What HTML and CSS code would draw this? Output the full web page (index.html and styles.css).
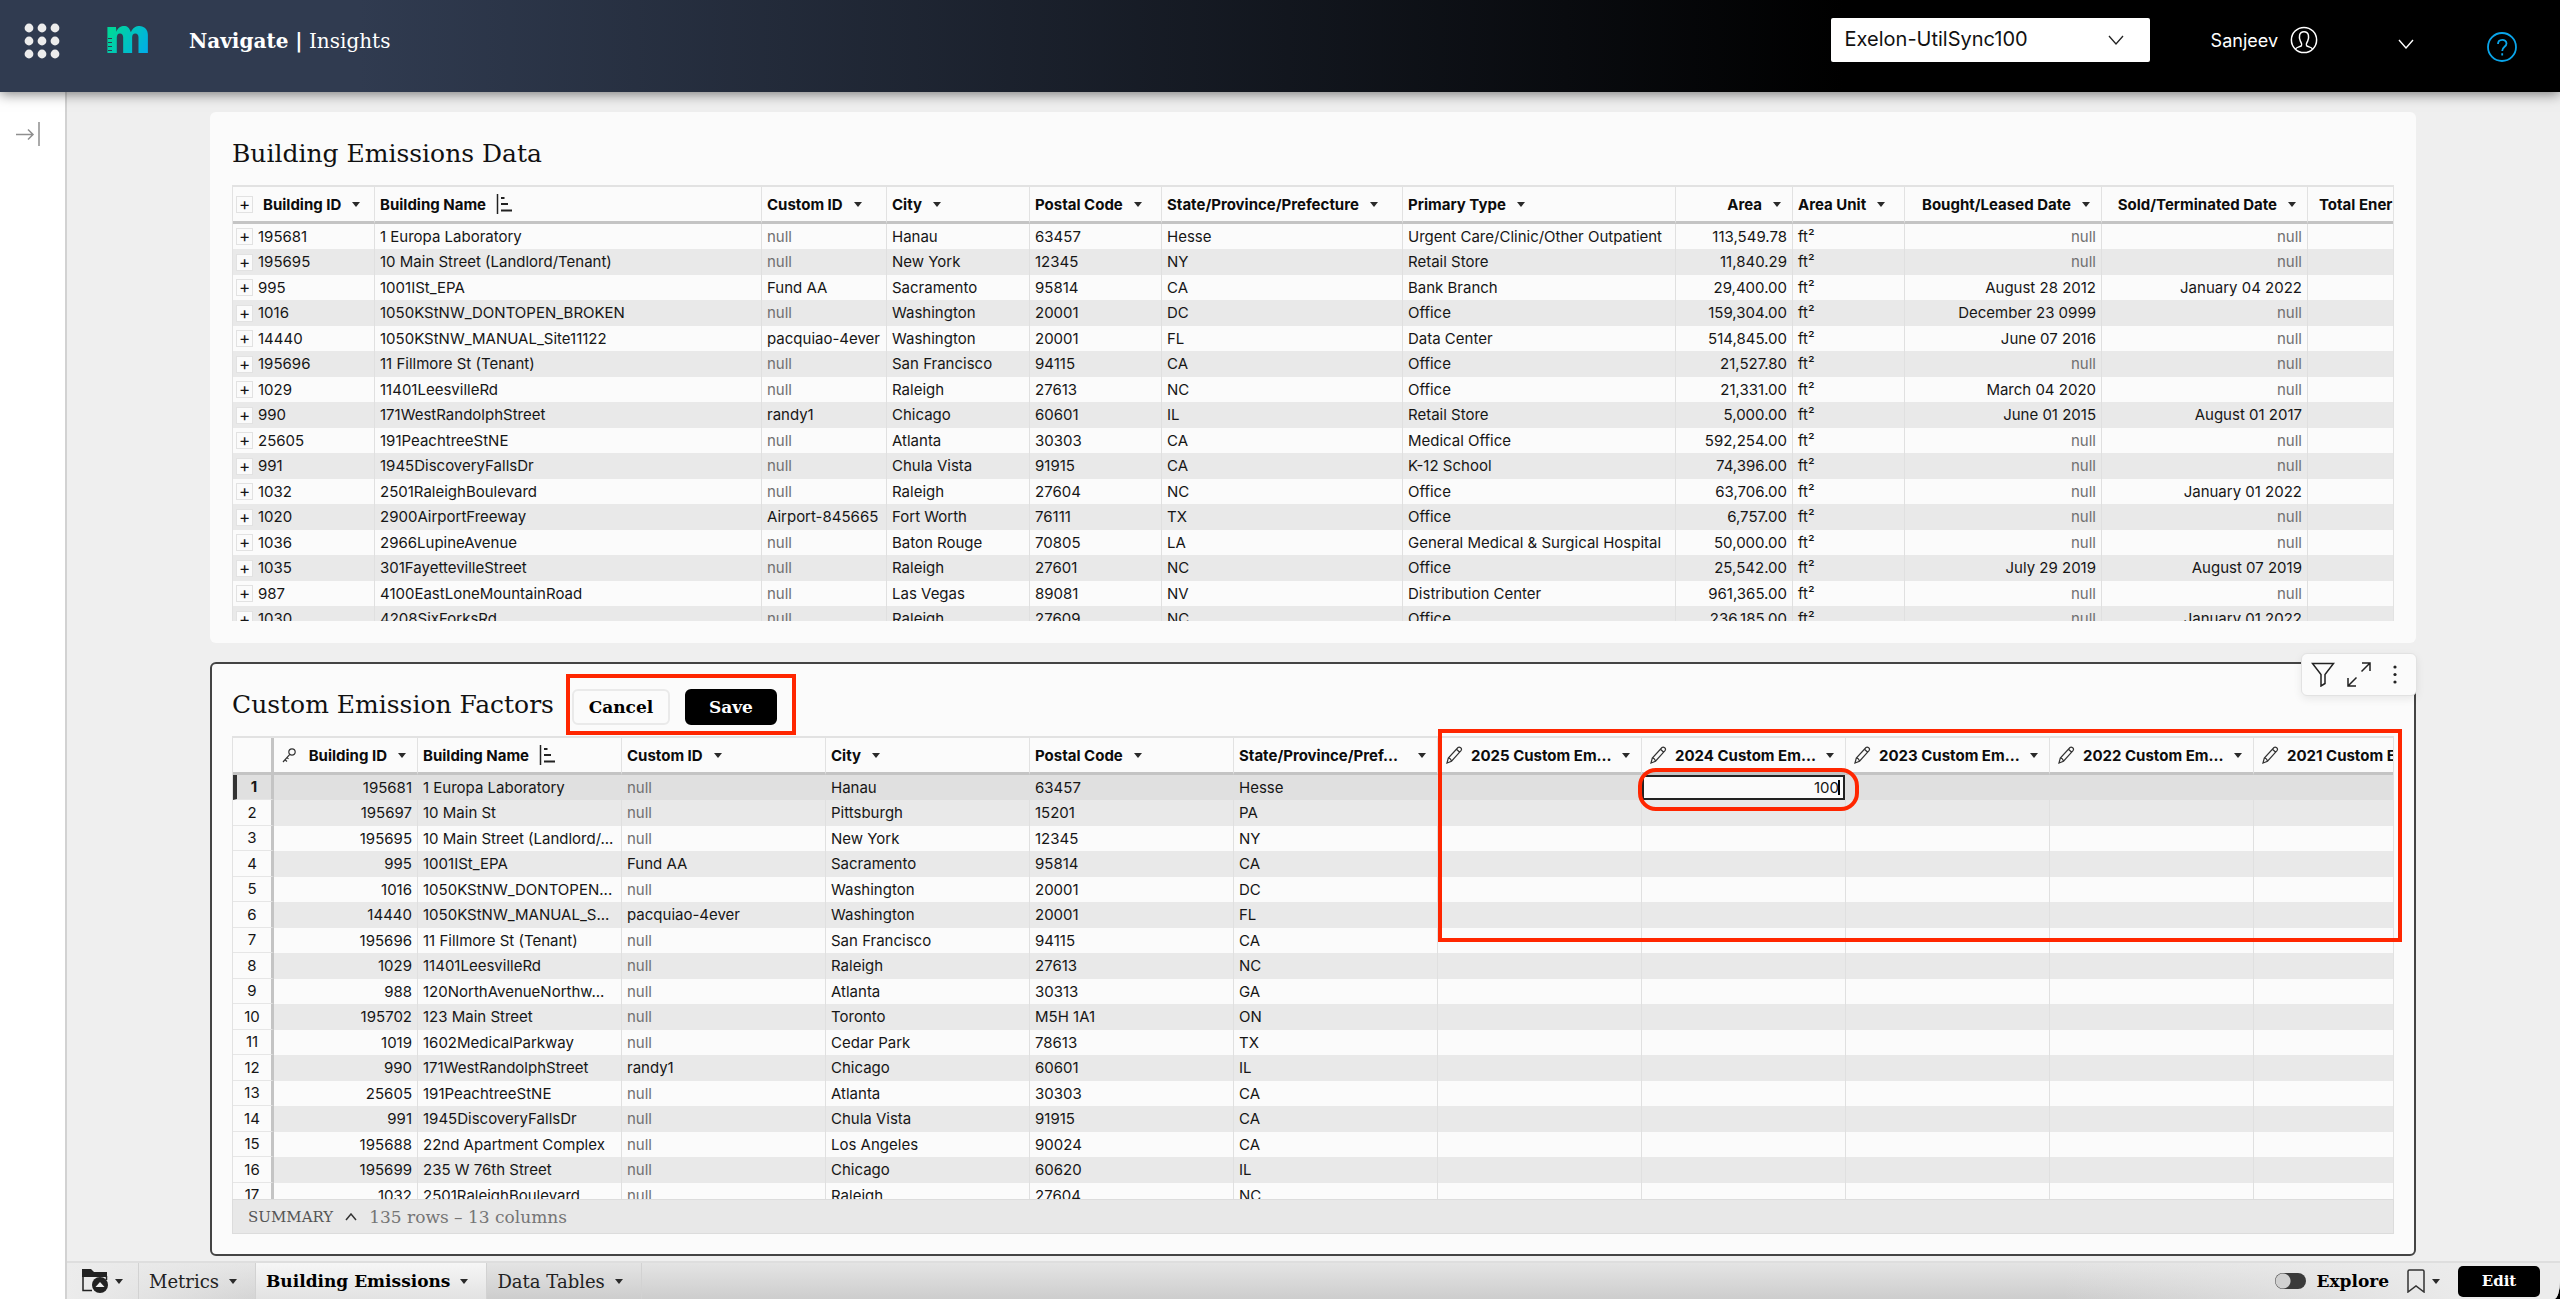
FILE: index.html
```
<!DOCTYPE html>
<html lang="en">

<head>
	<meta charset="UTF-8">
	<meta name="viewport" content="width=device-width, initial-scale=1.0">
	<title>Navigate | Insights</title>
	<link rel="stylesheet" href="styles.css">
</head>

<body>
	<header class="topbar">
		<button class="apps" aria-label="Apps">
			<svg width="36" height="36" viewBox="0 0 36 36" fill="#ececec">
				<circle cx="5" cy="5" r="4.4" /><circle cx="18" cy="5" r="4.4" /><circle cx="31" cy="5" r="4.4" />
				<circle cx="5" cy="18" r="4.4" /><circle cx="18" cy="18" r="4.4" /><circle cx="31" cy="18" r="4.4" />
				<circle cx="5" cy="31" r="4.4" /><circle cx="18" cy="31" r="4.4" /><circle cx="31" cy="31" r="4.4" />
			</svg>
		</button>
		<a href="#" class="logo">m</a>
		<div class="product"><b>Navigate |</b> Insights</div>

		<div class="account">
			<label class="picker">
				<select aria-label="Account">
					<option>Exelon-UtilSync100</option>
				</select>
				<svg width="16" height="10" viewBox="0 0 16 10" fill="none" stroke="#222" stroke-width="1.3"><path d="M1 1l7 8 7-8" /></svg>
			</label>
			<div class="user">
				<span>Sanjeev</span>
				<svg width="28" height="28" viewBox="0 0 28 28" fill="none" stroke="#fff" stroke-width="1.5">
					<circle cx="14" cy="14" r="12.6" />
					<path d="M5.5 23c1-2 4.5-2 6-3.4 1-1-.2-2.400-1.200-4.600-1.500-3.300-1.600-9.200 3.700-9.200s5.200 5.900 3.700 9.200c-1 2.200-2.200 3.600-1.200 4.600 1.500 1.400 5 1.400 6 3.400" />
				</svg>
			</div>
			<button class="user-menu" aria-label="User menu">
				<svg width="16" height="10" viewBox="0 0 16 10" fill="none" stroke="#fff" stroke-width="1.4"><path d="M1 1l7 8 7-8" /></svg>
			</button>
			<button class="help" aria-label="Help">
				<svg width="30" height="30" viewBox="0 0 30 30" fill="none" stroke="#0aa5ea" stroke-width="1.800">
					<circle cx="15" cy="15" r="14" />
					<path d="M11 12c0-5.500 8.500-5.500 8.500-.5 0 3.500-4.300 3.200-4.300 7.500M15.200 21.200v2.200" />
				</svg>
			</button>
		</div>
	</header>

	<div class="body">
		<aside class="side">
			<button aria-label="Expand sidebar">
				<svg width="26" height="26" viewBox="0 0 26 26" fill="none" stroke="#8f8f8f" stroke-width="1.500"><path d="M1 13.500h17M13 8.500l5 5-5 5M24 1v24" /></svg>
			</button>
		</aside>

		<div class="workspace">
			<main class="page">
				<section class="card">
					<div class="card-head">
						<h2>Building Emissions Data</h2>
					</div>
					<div class="grid">
						<table class="data">
							<colgroup>
								<col class="w142"><col class="w387"><col class="w125"><col class="w143"><col class="w132"><col class="w241">
								<col class="w273"><col class="w117"><col class="w112"><col class="w197"><col class="w206"><col class="w204">
							</colgroup>
							<thead>
								<tr>
									<th><div class="th"><span class="plus">+</span><span class="pushed">Building ID</span><i class="caret"></i></div></th>
									<th><div class="th">Building Name<svg class="sort" width="16" height="20" viewBox="0 0 16 20"><path d="M1.500 0v20" fill="none" stroke="#222" stroke-width="1.500" /><path d="M5 4h3.500M5 10h7M5 16.500h11" fill="none" stroke="#222" stroke-width="2" /></svg></div></th>
									<th><div class="th">Custom ID<i class="caret"></i></div></th>
									<th><div class="th">City<i class="caret"></i></div></th>
									<th><div class="th">Postal Code<i class="caret"></i></div></th>
									<th><div class="th">State/Province/Prefecture<i class="caret"></i></div></th>
									<th><div class="th">Primary Type<i class="caret"></i></div></th>
									<th><div class="th right">Area<i class="caret"></i></div></th>
									<th><div class="th">Area Unit<i class="caret"></i></div></th>
									<th><div class="th right">Bought/Leased Date<i class="caret"></i></div></th>
									<th><div class="th right">Sold/Terminated Date<i class="caret"></i></div></th>
									<th><div class="th inset">Total Ener</div></th>
								</tr>
							</thead>
							<tbody id="buildings"></tbody>
						</table>
					</div>
				</section>

				<section class="card selected">
					<div class="card-head">
						<h2>Custom Emission Factors</h2>
						<div class="actions">
							<button class="btn">Cancel</button>
							<button class="btn btn-dark">Save</button>
						</div>
					</div>
					<div class="grid">
						<table class="data factors">
							<colgroup>
								<col class="w41"><col class="w144"><col class="w204"><col class="w204"><col class="w204"><col class="w204"><col class="w204">
								<col class="w204"><col class="w204"><col class="w204"><col class="w204"><col class="w204">
							</colgroup>
							<thead>
								<tr id="factorHead">
									<th class="num"></th>
									<th><div class="th right"><svg class="key" width="14" height="15" viewBox="0 0 14 15" fill="none" stroke="#333" stroke-width="1.200"><circle cx="10" cy="4" r="3.200" /><path d="M7.800 6.400L1 14M3 11.800l2 1.700M5 9.600l1.500 1.300" /></svg>Building ID<i class="caret"></i></div></th>
									<th><div class="th">Building Name<svg class="sort" width="16" height="20" viewBox="0 0 16 20"><path d="M1.500 0v20" fill="none" stroke="#222" stroke-width="1.500" /><path d="M5 4h3.500M5 10h7M5 16.500h11" fill="none" stroke="#222" stroke-width="2" /></svg></div></th>
									<th><div class="th">Custom ID<i class="caret"></i></div></th>
									<th><div class="th">City<i class="caret"></i></div></th>
									<th><div class="th">Postal Code<i class="caret"></i></div></th>
									<th><div class="th">State/Province/Pref...<i class="caret end"></i></div></th>
								</tr>
							</thead>
							<tbody id="factors"></tbody>
						</table>
					</div>
					<div class="summary">
						<span>SUMMARY</span>
						<svg width="12" height="8" viewBox="0 0 12 8" fill="none" stroke="#333" stroke-width="1.500"><path d="M1 7l5-6 5 6" /></svg>
						<span class="count">135 rows – 13 columns</span>
					</div>

					<div class="tools">
						<button aria-label="Filter">
							<svg width="24" height="25" viewBox="0 0 24 25" fill="none" stroke="#222" stroke-width="1.500"><path d="M1.500 1.500h21l-8.500 11v9l-4 2.500v-11.500z" /></svg>
						</button>
						<button aria-label="Maximize">
							<svg width="24" height="25" viewBox="0 0 24 25" fill="none" stroke="#222" stroke-width="1.500"><path d="M14.500 9.500l8.500-8.500M15 1h8v8M9.500 15.500L1 24M1 16v8h8" /></svg>
						</button>
						<button aria-label="More">
							<svg width="24" height="25" viewBox="0 0 24 25" fill="#222"><circle cx="12" cy="5" r="1.600" /><circle cx="12" cy="12.500" r="1.600" /><circle cx="12" cy="20" r="1.600" /></svg>
						</button>
					</div>
					<div class="mark mark-actions"></div>
					<div class="mark mark-columns"></div>
					<div class="mark mark-cell"></div>
				</section>
			</main>

			<footer class="tabs">
				<button class="tab tab-icon" aria-label="Pages">
					<svg width="27" height="24" viewBox="0 0 27 24">
						<path d="M0 0h9l3 3h13v5H0z" fill="#222" />
						<path d="M1 7v14.500h9M24.500 7v4" fill="none" stroke="#222" stroke-width="1.500" />
						<circle cx="18" cy="16" r="8" fill="#222" />
						<path d="M13.500 18l4.500-5 4.500 5z" fill="#eee" />
					</svg>
					<i class="caret"></i>
				</button>
				<button class="tab">Metrics<i class="caret"></i></button>
				<button class="tab active">Building Emissions<i class="caret"></i></button>
				<button class="tab">Data Tables<i class="caret"></i></button>
				<div class="tabs-end">
					<label class="explore"><input type="checkbox">Explore</label>
					<button class="bookmark" aria-label="Bookmarks">
						<svg width="18" height="24" viewBox="0 0 18 24" fill="none" stroke="#333" stroke-width="1.500"><path d="M1 2.500q0-1.500 1.500-1.500h13q1.500 0 1.500 1.500v20.500l-8-6-8 6z" /></svg>
						<i class="caret"></i>
					</button>
					<button class="edit">Edit</button>
				</div>
			</footer>
		</div>
	</div>

	<script>
		let buildings = [
			["195681", "1 Europa Laboratory", null, "Hanau", "63457", "Hesse", "Urgent Care/Clinic/Other Outpatient", "113,549.78", null, null],
			["195695", "10 Main Street (Landlord/Tenant)", null, "New York", "12345", "NY", "Retail Store", "11,840.29", null, null],
			["995", "1001ISt_EPA", "Fund AA", "Sacramento", "95814", "CA", "Bank Branch", "29,400.00", "August 28 2012", "January 04 2022"],
			["1016", "1050KStNW_DONTOPEN_BROKEN", null, "Washington", "20001", "DC", "Office", "159,304.00", "December 23 0999", null],
			["14440", "1050KStNW_MANUAL_Site11122", "pacquiao-4ever", "Washington", "20001", "FL", "Data Center", "514,845.00", "June 07 2016", null],
			["195696", "11 Fillmore St (Tenant)", null, "San Francisco", "94115", "CA", "Office", "21,527.80", null, null],
			["1029", "11401LeesvilleRd", null, "Raleigh", "27613", "NC", "Office", "21,331.00", "March 04 2020", null],
			["990", "171WestRandolphStreet", "randy1", "Chicago", "60601", "IL", "Retail Store", "5,000.00", "June 01 2015", "August 01 2017"],
			["25605", "191PeachtreeStNE", null, "Atlanta", "30303", "CA", "Medical Office", "592,254.00", null, null],
			["991", "1945DiscoveryFallsDr", null, "Chula Vista", "91915", "CA", "K-12 School", "74,396.00", null, null],
			["1032", "2501RaleighBoulevard", null, "Raleigh", "27604", "NC", "Office", "63,706.00", null, "January 01 2022"],
			["1020", "2900AirportFreeway", "Airport-845665", "Fort Worth", "76111", "TX", "Office", "6,757.00", null, null],
			["1036", "2966LupineAvenue", null, "Baton Rouge", "70805", "LA", "General Medical & Surgical Hospital", "50,000.00", null, null],
			["1035", "301FayettevilleStreet", null, "Raleigh", "27601", "NC", "Office", "25,542.00", "July 29 2019", "August 07 2019"],
			["987", "4100EastLoneMountainRoad", null, "Las Vegas", "89081", "NV", "Distribution Center", "961,365.00", null, null],
			["1030", "4208SixForksRd", null, "Raleigh", "27609", "NC", "Office", "236,185.00", null, "January 01 2022"],
		];

		let factors = [
			["195681", "1 Europa Laboratory", null, "Hanau", "63457", "Hesse"],
			["195697", "10 Main St", null, "Pittsburgh", "15201", "PA"],
			["195695", "10 Main Street (Landlord/...", null, "New York", "12345", "NY"],
			["995", "1001ISt_EPA", "Fund AA", "Sacramento", "95814", "CA"],
			["1016", "1050KStNW_DONTOPEN...", null, "Washington", "20001", "DC"],
			["14440", "1050KStNW_MANUAL_S...", "pacquiao-4ever", "Washington", "20001", "FL"],
			["195696", "11 Fillmore St (Tenant)", null, "San Francisco", "94115", "CA"],
			["1029", "11401LeesvilleRd", null, "Raleigh", "27613", "NC"],
			["988", "120NorthAvenueNorthw...", null, "Atlanta", "30313", "GA"],
			["195702", "123 Main Street", null, "Toronto", "M5H 1A1", "ON"],
			["1019", "1602MedicalParkway", null, "Cedar Park", "78613", "TX"],
			["990", "171WestRandolphStreet", "randy1", "Chicago", "60601", "IL"],
			["25605", "191PeachtreeStNE", null, "Atlanta", "30303", "CA"],
			["991", "1945DiscoveryFallsDr", null, "Chula Vista", "91915", "CA"],
			["195688", "22nd Apartment Complex", null, "Los Angeles", "90024", "CA"],
			["195699", "235 W 76th Street", null, "Chicago", "60620", "IL"],
			["1032", "2501RaleighBoulevard", null, "Raleigh", "27604", "NC"],
		];

		let years = ["2025 Custom Em...", "2024 Custom Em...", "2023 Custom Em...", "2022 Custom Em...", "2021 Custom Em..."];

		let pencil = `<svg width="17" height="18" viewBox="0 0 17 18" fill="none" stroke="#333" stroke-width="1.200"><path d="M1 17l1.300-5L12 1.500q1.200-1 2.700.3t.3 2.800L5.500 15.200zM2.300 12q2.500.3 3.200 3.200M10.500 3.200l3.200 3" /></svg>`;

		// one table cell, empty values are shown as "null"
		let cell = (text, cls = "") => {
			if (text === null) {
				return `<td class="${cls} null">null</td>`;
			}
			return `<td class="${cls}">${text.replace("&", "&amp;")}</td>`;
		}

		buildings.forEach((b) => {
			let tr = document.createElement("tr");
			tr.innerHTML = `<td><div class="id"><span class="plus">+</span>${b[0]}</div></td>`
				+ b.slice(1, 7).map((v) => cell(v)).join("")
				+ cell(b[7], "right") + cell("ft²") + cell(b[8], "right") + cell(b[9], "right") + "<td></td>";
			document.getElementById("buildings").appendChild(tr);
		});

		years.forEach((y) => {
			let th = document.createElement("th");
			th.innerHTML = `<div class="th editable">${pencil}<span>${y}</span><i class="caret end"></i></div>`;
			document.getElementById("factorHead").appendChild(th);
		});

		factors.forEach((f, i) => {
			let tr = document.createElement("tr");
			let values = years.map((y, n) => {
				if (i === 0 && n === 1) {
					return `<td class="editing"><input type="text" value="100" aria-label="2024 factor"></td>`;
				}
				return "<td></td>";
			});
			tr.innerHTML = `<td class="num">${i + 1}</td>` + cell(f[0], "right")
				+ f.slice(1).map((v) => cell(v)).join("") + values.join("");
			document.getElementById("factors").appendChild(tr);
		});
	</script>
</body>

</html>
```
FILE: styles.css
```
* {
	margin: 0;
	padding: 0;
	box-sizing: border-box;
}

body {
	height: 100vh;
	display: flex;
	flex-direction: column;
	overflow: hidden;
	background-color: #000;
	font-family: "Inter", sans-serif;
	font-size: 15px;
	color: #161616;
}

button,
input,
select {
	border: none;
	outline: none;
	background: none;
	font: inherit;
	color: inherit;
}

svg {
	display: block;
	flex: none;
}

/* top bar */
.topbar {
	position: relative;
	z-index: 2;
	flex: none;
	height: 92px;
	padding: 0 43px 0 24px;
	display: flex;
	align-items: center;
	background: linear-gradient(90deg, #303b50 0%, #303b50 14%, #000 72%);
	box-shadow: 0 2px 12px rgba(0, 0, 0, 0.5);
	color: #fff;
}

.topbar > * {
	margin-bottom: 10px;
}

.logo {
	position: relative;
	margin-left: 45px;
	width: 46px;
	line-height: 40px;
	padding-bottom: 10px;
	font-size: 48px;
	font-weight: 900;
	text-decoration: none;
	color: transparent;
	background: linear-gradient(120deg, #00d69a 20%, #00a9f0 90%);
	-webkit-background-clip: text;
	background-clip: text;
}

/* ruler ticks on the logo */
.logo::after {
	content: "";
	position: absolute;
	left: 3px;
	top: 22px;
	width: 4px;
	height: 16px;
	background: repeating-linear-gradient(#303b50 0 1px, transparent 1px 4px);
}

.product {
	margin-left: 38px;
	font-family: "DejaVu Serif", serif;
	font-size: 20px;
}

.account {
	margin-left: auto;
	margin-bottom: 12px;
	display: flex;
	align-items: center;
}

.picker {
	position: relative;
}

.picker select {
	appearance: none;
	width: 319px;
	height: 44px;
	padding: 0 14px 2px;
	border-radius: 2px;
	background-color: #fff;
	font-size: 20px;
	color: #111;
}

.picker svg {
	position: absolute;
	right: 26px;
	top: 17px;
}

.user {
	margin-left: 61px;
	display: flex;
	align-items: center;
	gap: 12px;
	font-size: 18px;
}

.user-menu {
	margin-left: 80px;
	padding-top: 8px;
}

.help {
	margin-left: 73px;
	padding-top: 14px;
}

/* layout */
.body {
	flex: 1;
	min-height: 0;
	display: flex;
}

.side {
	flex: none;
	width: 67px;
	padding: 29px 15px;
	background-color: #fff;
	border-right: 2px solid #d2d2d2;
}

.workspace {
	flex: 1;
	min-width: 0;
	display: flex;
	flex-direction: column;
}

.page {
	flex: 1;
	min-height: 0;
	padding: 20px 144px 5px 143px;
	display: grid;
	grid-template-rows: 531fr 594fr;
	gap: 19px;
	background-color: #efefef;
}

.card {
	position: relative;
	min-width: 0;
	min-height: 0;
	padding: 0 22px 22px;
	display: flex;
	flex-direction: column;
	border-radius: 6px;
	background-color: #fbfbfb;
}

.card.selected {
	padding: 0 20px 20px;
	border: 2px solid #444;
}

.card-head {
	flex: none;
	height: 73px;
	padding-top: 9px;
	display: flex;
	align-items: center;
	gap: 18px;
}

.selected .card-head {
	height: 72px;
}

h2 {
	font-family: "DejaVu Serif", serif;
	font-size: 25px;
	font-weight: normal;
	color: #111;
}

.actions {
	display: flex;
	gap: 15px;
	padding-top: 4px;
}

.btn {
	width: 98px;
	height: 36px;
	border: 2px solid #eaeaea;
	border-radius: 6px;
	font-family: "DejaVu Serif", serif;
	font-size: 17px;
	font-weight: bold;
	color: #000;
}

.btn-dark {
	width: 92px;
	background-color: #000;
	border-color: #000;
	color: #fff;
}

/* tables */
.grid {
	flex: 1;
	min-height: 0;
	overflow: hidden;
	border: 1px solid #e2e2e2;
	border-top-width: 2px;
	border-bottom: none;
}

.data {
	width: 0;
	table-layout: fixed;
	border-collapse: separate;
	border-spacing: 0;
}

.w41 { width: 41px; }
.w112 { width: 112px; }
.w117 { width: 117px; }
.w125 { width: 125px; }
.w132 { width: 132px; }
.w142 { width: 142px; }
.w143 { width: 143px; }
.w144 { width: 144px; }
.w197 { width: 197px; }
.w204 { width: 204px; }
.w206 { width: 206px; }
.w241 { width: 241px; }
.w273 { width: 273px; }
.w387 { width: 387px; }

th {
	height: 37px;
	border-right: 1px solid #e2e2e2;
	border-bottom: 3px solid #c4c4c4;
	text-align: left;
	white-space: nowrap;
}

.th {
	display: flex;
	align-items: center;
	padding: 0 11px 0 5px;
	font-weight: 700;
	color: #0c0c0c;
}

.th.right {
	justify-content: flex-end;
}

.th.inset {
	padding-left: 11px;
}

.th .caret.end {
	margin-left: auto;
}

.th .pushed {
	margin-left: 10px;
}

.th .plus {
	margin-left: -2px;
}

.caret {
	flex: none;
	margin-left: 11px;
	border: 4px solid transparent;
	border-top: 5px solid #2a2a2a;
	border-bottom: none;
}

.sort {
	margin-left: 10px;
}

.key {
	margin-right: 13px;
}

.th.editable {
	padding-left: 8px;
}

.editable span {
	margin-left: 8px;
}

td {
	height: 25px;
	padding: 0 5px;
	border-right: 1px solid #e0e0e0;
	line-height: 24px;
	white-space: nowrap;
	overflow: hidden;
}

tbody tr:nth-child(even) {
	background-color: #e9e9e9;
}

tbody tr:nth-child(even) td {
	height: 26px;
}

td.right {
	text-align: right;
}

td.null {
	color: #707070;
}

.id {
	display: flex;
	align-items: center;
	gap: 5px;
	margin-left: -2px;
}

.plus {
	width: 17px;
	height: 17px;
	border: 1px solid #e2e2e2;
	background-color: #fbfbfb;
	line-height: 14px;
	text-align: center;
	font-size: 17px;
	font-weight: 400;
}

.factors .num {
	border-right: 3px solid #c4c4c4;
	text-align: center;
	background-color: #fbfbfb;
}

.factors td.num {
	border-bottom: 1px solid #e6e6e6;
}

.factors tbody tr:first-child {
	background-color: #e0e0e0;
}

.factors tbody tr:first-child .num {
	border-left: 4px solid #333;
	background-color: #e0e0e0;
	font-weight: bold;
}

td.editing {
	position: relative;
	padding: 0;
}

.editing input {
	display: block;
	width: 100%;
	height: 25px;
	padding: 0 4px;
	border: 2px solid #222;
	background-color: #fbfbfb;
	text-align: right;
}

/* text cursor */
.editing::after {
	content: "";
	position: absolute;
	right: 5px;
	top: 5px;
	width: 2px;
	height: 15px;
	background-color: #000;
}

.summary {
	flex: none;
	height: 35px;
	padding: 0 15px;
	display: flex;
	align-items: center;
	gap: 12px;
	border: 1px solid #dcdcdc;
	background-color: #e8e8e8;
	font-family: "DejaVu Serif", serif;
	font-size: 15px;
	color: #555;
}

.count {
	font-size: 17px;
	color: #757575;
}

/* floating toolbar of the selected card */
.tools {
	position: absolute;
	top: -11px;
	right: -3px;
	height: 43px;
	padding: 0 9px;
	display: flex;
	align-items: center;
	gap: 12px;
	border: 1px solid #e2e2e2;
	border-radius: 6px;
	background-color: #fbfbfb;
	box-shadow: 0 3px 8px rgba(0, 0, 0, 0.08);
}

/* red call-outs */
.mark {
	position: absolute;
	border: 4px solid #ff2600;
	pointer-events: none;
}

.mark-actions {
	left: 354px;
	top: 10px;
	width: 230px;
	height: 61px;
}

.mark-columns {
	left: 1226px;
	right: 12px;
	top: 65px;
	height: 213px;
}

.mark-cell {
	left: 1426px;
	top: 104px;
	width: 221px;
	height: 43px;
	border-radius: 18px;
}

/* bottom tabs */
.tabs {
	flex: none;
	height: 38px;
	padding-right: 20px;
	display: flex;
	border-top: 2px solid #dedede;
	border-bottom-right-radius: 6px 18px;
	background: linear-gradient(90deg, #ececec 0%, rgba(236, 236, 236, 0) 10%, rgba(236, 236, 236, 0) 80%, #ececec 97%), linear-gradient(#e4e4e4, #cdcdcd);
	font-family: "DejaVu Serif", serif;
	font-size: 18px;
}

.tab {
	padding: 0 18px 0 10px;
	display: flex;
	align-items: center;
	border-right: 1px solid #d2d2d2;
	color: #222;
}

.tab .caret {
	margin-left: 10px;
}

.tab-icon {
	padding: 0 15px;
}

.tab-icon .caret {
	margin-left: 6px;
}

.tab.active {
	background: linear-gradient(#f6f6f6, #e2e2e2);
	font-size: 17px;
	font-weight: bold;
	color: #000;
}

.tabs-end {
	margin-left: auto;
	display: flex;
	align-items: center;
	gap: 18px;
	font-size: 17px;
	font-weight: bold;
	color: #000;
}

.explore {
	display: flex;
	align-items: center;
	gap: 10px;
}

.explore input {
	appearance: none;
	width: 31px;
	height: 16px;
	border-radius: 8px;
	background: radial-gradient(circle at 8px 8px, #d0d0d0 7px, #3a3a3a 8px);
}

.bookmark {
	display: flex;
	align-items: center;
}

.bookmark .caret {
	margin-left: 7px;
}

.edit {
	width: 82px;
	height: 31px;
	border-radius: 5px;
	background-color: #000;
	font-size: 15px;
	font-weight: bold;
	color: #fff;
}
```
